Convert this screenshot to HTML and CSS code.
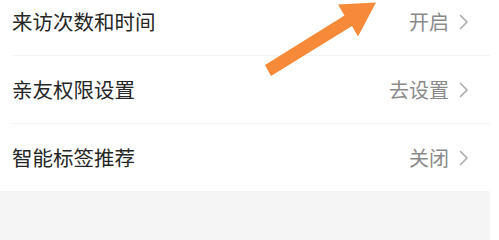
FILE: index.html
```html
<!DOCTYPE html>
<html lang="zh-CN">
<head>
<meta charset="utf-8">
<link rel="stylesheet" href="styles.css">
</head>
<body>
<div class="page">
  <ul class="list">
    <li class="row">
      <span class="label">来访次数和时间</span>
      <span class="value">开启<svg class="chev" viewBox="0 0 10 16" width="10" height="16"><polyline points="1.5,1.5 8,8 1.5,14.5"/></svg></span>
    </li>
    <li class="row">
      <span class="label">亲友权限设置</span>
      <span class="value">去设置<svg class="chev" viewBox="0 0 10 16" width="10" height="16"><polyline points="1.5,1.5 8,8 1.5,14.5"/></svg></span>
    </li>
    <li class="row">
      <span class="label">智能标签推荐</span>
      <span class="value">关闭<svg class="chev" viewBox="0 0 10 16" width="10" height="16"><polyline points="1.5,1.5 8,8 1.5,14.5"/></svg></span>
    </li>
  </ul>
  <div class="footer"></div>
  <svg class="arrow" viewBox="0 0 499 210" width="499" height="210">
    <polygon points="265,77 271,88 352,38 358,48.5 376,14.5 338,16.5 344.5,27.5"/>
  </svg>
</div>
</body>
</html>
```
FILE: styles.css
```css
html, body {
  margin: 0;
  padding: 0;
  background: #ffffff;
}
body {
  width: 499px;
  overflow: hidden;
  font-family: "Noto Sans CJK SC", "Noto Sans", sans-serif;
}
.page {
  position: relative;
  width: 490px;
}
.list {
  list-style: none;
  margin: -12px 0 0 0;
  padding: 0;
}
.row {
  display: flex;
  align-items: center;
  justify-content: space-between;
  height: 67px;
  margin-left: 12px;
  padding-right: 21px;
  border-bottom: 1px solid #f4f4f4;
}
.row:last-child {
  border-bottom: none;
}
.label {
  font-size: 20.5px;
  color: #262626;
  line-height: 1;
}
.value {
  display: flex;
  align-items: center;
  gap: 10px;
  font-size: 20px;
  color: #8a8a8a;
  line-height: 1;
}
.chev {
  display: block;
  fill: none;
  stroke: #ababab;
  stroke-width: 1.6;
  stroke-linecap: round;
  stroke-linejoin: round;
}
.footer {
  height: 60px;
  background: #f5f5f5;
}
.arrow {
  position: absolute;
  left: 0;
  top: 0;
}
.arrow polygon {
  fill: #f68a38;
}
```
